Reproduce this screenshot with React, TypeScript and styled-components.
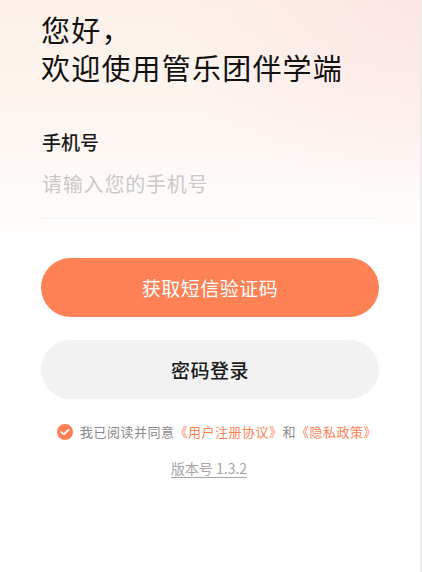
import { useState } from "react";
import styled, { createGlobalStyle } from "styled-components";

const GlobalStyle = createGlobalStyle`
  html, body {
    margin: 0;
    padding: 0;
    background: #ffffff;
  }
  * {
    box-sizing: border-box;
  }
`;

const App = () => {
  const [phone, setPhone] = useState("");
  const [agreed, setAgreed] = useState(true);

  return (
    <>
      <GlobalStyle />
      <Page>
        {/* 顶部欢迎语 */}
        <Greeting>
          您好，
          <br />
          欢迎使用管乐团伴学端
        </Greeting>

        {/* 手机号输入 */}
        <Field>
          <FieldLabel>手机号</FieldLabel>
          <PhoneInput
            type="tel"
            placeholder="请输入您的手机号"
            value={phone}
            onChange={(e) => setPhone(e.target.value)}
          />
        </Field>

        <Actions>
          <PillButton $primary>获取短信验证码</PillButton>
          <PillButton>密码登录</PillButton>
        </Actions>

        {/* 协议 */}
        <Agreement onClick={() => setAgreed(!agreed)}>
          <CheckCircle $checked={agreed}>
            {agreed && (
              <svg width="10" height="8" viewBox="0 0 10 8" fill="none">
                <path
                  d="M1.3 4.1 L3.9 6.4 L8.7 1.6"
                  stroke="#fff"
                  strokeWidth="1.7"
                  strokeLinecap="round"
                  strokeLinejoin="round"
                />
              </svg>
            )}
          </CheckCircle>
          <AgreementText>
            我已阅读并同意<Link>《用户注册协议》</Link>和<Link>《隐私政策》</Link>
          </AgreementText>
        </Agreement>

        <Version>版本号 1.3.2</Version>
      </Page>
    </>
  );
};

export default App;

/* 页面 */
const Page = styled.div`
  width: 422px;
  min-height: 572px;
  padding: 10px 43px 0 41px;
  border-right: 2px solid #ececec;
  font-family: "Noto Sans CJK SC", "Noto Sans", sans-serif;
  background:
    radial-gradient(ellipse 260px 200px at 100% 0%, rgba(253, 226, 228, 0.75), rgba(253, 226, 228, 0) 100%),
    linear-gradient(180deg, #fdf1e9 0px, #fef6f1 120px, #ffffff 250px);
`;

const Greeting = styled.h1`
  margin: 0;
  font-size: 29px;
  line-height: 38px;
  font-weight: 400;
  letter-spacing: 1.2px;
  color: #111111;
`;

const Field = styled.div`
  display: flex;
  flex-direction: column;
  margin-top: 43px;
  padding-left: 1px;
  border-bottom: 1px solid #f2f2f2;
`;

const FieldLabel = styled.div`
  font-size: 19px;
  line-height: 26px;
  font-weight: 500;
  color: #1a1a1a;
`;

const PhoneInput = styled.input`
  margin-top: 15px;
  height: 48px;
  padding: 0 0 22px;
  border: none;
  outline: none;
  background: transparent;
  font-family: inherit;
  font-size: 20px;
  letter-spacing: 0.8px;
  color: #333333;
  &::placeholder {
    color: #c9c9c9;
  }
`;

const Actions = styled.div`
  display: flex;
  flex-direction: column;
  gap: 23px;
  margin-top: 39px;
`;

const PillButton = styled.button<{ $primary?: boolean }>`
  width: 338px;
  height: 59px;
  border: none;
  border-radius: 30px;
  font-family: inherit;
  font-size: 19px;
  font-weight: ${({ $primary }) => ($primary ? 400 : 500)};
  letter-spacing: 0.5px;
  cursor: pointer;
  background: ${({ $primary }) => ($primary ? "#ff8156" : "#f2f2f2")};
  color: ${({ $primary }) => ($primary ? "#ffffff" : "#1a1a1a")};
`;

const Agreement = styled.div`
  display: flex;
  align-items: center;
  gap: 7px;
  margin-top: 23px;
  padding-left: 16px;
  cursor: pointer;
`;

const CheckCircle = styled.span<{ $checked: boolean }>`
  display: flex;
  align-items: center;
  justify-content: center;
  width: 16px;
  height: 16px;
  border-radius: 50%;
  flex-shrink: 0;
  background: ${({ $checked }) => ($checked ? "#ff7f55" : "transparent")};
  border: ${({ $checked }) => ($checked ? "none" : "1px solid #c9c9c9")};
`;

const AgreementText = styled.span`
  font-size: 13px;
  line-height: 20px;
  color: #8a8a8a;
  letter-spacing: 0.5px;
  white-space: nowrap;
`;

const Link = styled.span`
  color: #ff8156;
`;

const Version = styled.div`
  margin-top: 16px;
  text-align: center;
  font-size: 14px;
  line-height: 20px;
  color: #a6a6a6;
  text-decoration: underline;
  text-underline-offset: 3px;
`;
